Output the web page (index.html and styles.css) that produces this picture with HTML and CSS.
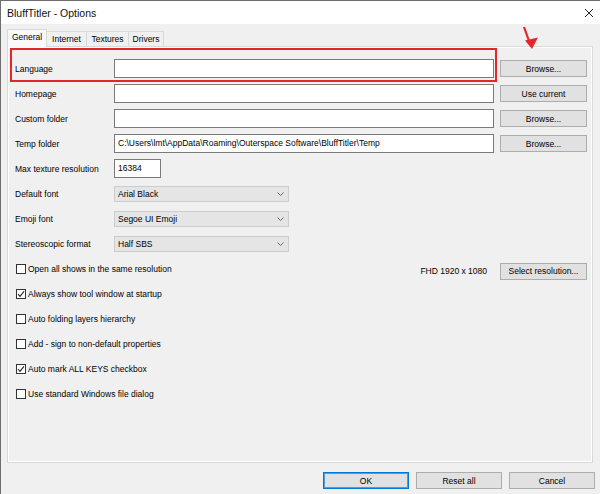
FILE: index.html
```html
<!DOCTYPE html>
<html>
<head>
<meta charset="utf-8">
<link rel="stylesheet" href="styles.css">
</head>
<body>
<div class="window">
  <div class="titlebar">
    <span class="title">BluffTitler - Options</span>
    <svg class="close" width="10" height="10" viewBox="0 0 10 10"><path d="M1 1L9 9M9 1L1 9" stroke="#222" stroke-width="1" fill="none"/></svg>
  </div>
  <div class="body">
    <div class="tabs">
      <div class="tab active t-general">General</div>
      <div class="tab t-internet">Internet</div>
      <div class="tab t-textures">Textures</div>
      <div class="tab t-drivers">Drivers</div>
    </div>
    <div class="panel">
      <div class="row"><span class="label">Language</span><div class="input"></div><div class="btn side">Browse...</div></div>
      <div class="row"><span class="label">Homepage</span><div class="input"></div><div class="btn side">Use current</div></div>
      <div class="row"><span class="label">Custom folder</span><div class="input"></div><div class="btn side">Browse...</div></div>
      <div class="row"><span class="label">Temp folder</span><div class="input">C:\Users\lmt\AppData\Roaming\Outerspace Software\BluffTitler\Temp</div><div class="btn side">Browse...</div></div>
      <div class="row"><span class="label">Max texture resolution</span><div class="input short">16384</div></div>
      <div class="row"><span class="label">Default font</span><div class="combo"><span>Arial Black</span><svg width="7" height="4" viewBox="0 0 7 4"><path d="M0.5 0.5L3.5 3.5L6.5 0.5" stroke="#666" fill="none"/></svg></div></div>
      <div class="row"><span class="label">Emoji font</span><div class="combo"><span>Segoe UI Emoji</span><svg width="7" height="4" viewBox="0 0 7 4"><path d="M0.5 0.5L3.5 3.5L6.5 0.5" stroke="#666" fill="none"/></svg></div></div>
      <div class="row"><span class="label">Stereoscopic format</span><div class="combo"><span>Half SBS</span><svg width="7" height="4" viewBox="0 0 7 4"><path d="M0.5 0.5L3.5 3.5L6.5 0.5" stroke="#666" fill="none"/></svg></div></div>
      <div class="row">
        <div class="check"><span class="box"></span>Open all shows in the same resolution</div>
        <div class="res"><span>FHD 1920 x 1080</span><div class="btn side">Select resolution...</div></div>
      </div>
      <div class="row"><div class="check"><span class="box"><svg width="8" height="8" viewBox="0 0 8 8"><path d="M1 4L3 6.3L7 1.3" stroke="#222" stroke-width="1.1" fill="none"/></svg></span>Always show tool window at startup</div></div>
      <div class="row"><div class="check"><span class="box"></span>Auto folding layers hierarchy</div></div>
      <div class="row"><div class="check"><span class="box"></span>Add - sign to non-default properties</div></div>
      <div class="row"><div class="check"><span class="box"><svg width="8" height="8" viewBox="0 0 8 8"><path d="M1 4L3 6.3L7 1.3" stroke="#222" stroke-width="1.1" fill="none"/></svg></span>Auto mark ALL KEYS checkbox</div></div>
      <div class="row"><div class="check"><span class="box"></span>Use standard Windows file dialog</div></div>
    </div>
    <div class="footer">
      <div class="btn foot default">OK</div>
      <div class="btn foot">Reset all</div>
      <div class="btn foot">Cancel</div>
    </div>
  </div>
  <div class="highlight"></div>
  <svg class="arrow" width="18" height="26" viewBox="0 0 18 26"><path d="M2 1L7 15" stroke="#e3262b" stroke-width="2.2" fill="none"/><path d="M3 14.5L16 11.5L10 23Z" fill="#e3262b"/></svg>
</div>
</body>
</html>
```

FILE: styles.css
```css
html, body {
  margin: 0;
  padding: 0;
}
body {
  width: 600px;
  height: 494px;
  overflow: hidden;
  background: #f0f0f0;
  font-family: "Liberation Sans", Arial, sans-serif;
  font-size: 8.5px;
  color: #000;
}
.window {
  position: relative;
  width: 600px;
  height: 494px;
  box-sizing: border-box;
  border-top: 1px solid #6e6e6e;
  border-left: 1px solid #6e6e6e;
  background: #f0f0f0;
}
.titlebar {
  height: 23px;
  background: #fff;
  display: flex;
  align-items: center;
  justify-content: space-between;
  padding: 0 6px 0 6px;
}
.title {
  font-size: 10.5px;
  color: #111;
}
.close {
  display: block;
}
.body {
  padding: 4px 5px 0 6px;
}
.tabs {
  display: flex;
  align-items: flex-end;
  height: 18px;
}
.tab {
  height: 15px;
  box-sizing: border-box;
  border: 1px solid #d9d9d9;
  border-bottom: none;
  border-left: none;
  background: #f0f0f0;
  display: flex;
  align-items: center;
  justify-content: center;
  line-height: 1;
  padding-top: 1px;
}
.tab.active {
  height: 18px;
  border-left: 1px solid #d9d9d9;
  background: #f9f9f9;
  position: relative;
  top: 1px;
  padding-top: 0;
  padding-bottom: 3px;
}
.t-general { width: 40px; }
.t-internet { width: 40px; }
.t-textures { width: 42px; }
.t-drivers { width: 35px; }
.panel {
  height: 417px;
  box-sizing: border-box;
  margin-right: 2px;
  border: 1px solid #d9d9d9;
  box-shadow: inset 1px 1px 0 #fff, inset -1px -1px 0 #fff;
  padding: 9px 5px 0 7px;
  background: #f0f0f0;
}
.row {
  height: 25px;
  display: flex;
  align-items: center;
}
.label {
  width: 99px;
  flex: none;
}
.input {
  flex: 1;
  height: 19px;
  box-sizing: border-box;
  border: 1px solid #7a7a7a;
  background: #fff;
  padding-left: 3px;
  line-height: 17px;
  white-space: nowrap;
  overflow: hidden;
}
.input.short {
  flex: none;
  width: 47px;
}
.btn {
  height: 17px;
  box-sizing: border-box;
  border: 1px solid #adadad;
  background: #e1e1e1;
  display: flex;
  align-items: center;
  justify-content: center;
  white-space: nowrap;
}
.btn.side {
  width: 87px;
  margin-left: 6px;
  flex: none;
}
.combo {
  width: 175px;
  height: 16px;
  box-sizing: border-box;
  border: 1px solid #cccccc;
  background: #e5e5e5;
  display: flex;
  align-items: center;
  justify-content: space-between;
  padding: 0 4px 0 3px;
}
.combo svg {
  display: block;
}
.check {
  display: flex;
  align-items: center;
  margin-left: 1px;
}
.box {
  width: 10px;
  height: 10px;
  box-sizing: border-box;
  border: 1px solid #333;
  background: #fff;
  margin-right: 2px;
  display: flex;
  align-items: center;
  justify-content: center;
}
.box svg {
  display: block;
}
.res {
  margin-left: auto;
  display: flex;
  align-items: center;
  margin-top: 5px;
}
.res .btn.side {
  margin-left: 13px;
}
.footer {
  display: flex;
  justify-content: flex-end;
  gap: 7px;
  margin-top: 9px;
}
.btn.foot {
  width: 86px;
}
.btn.default {
  border: 1px solid #0078d7;
  box-shadow: inset 0 0 0 1px #4a9ee0;
}
.highlight {
  position: absolute;
  left: 9px;
  top: 47px;
  width: 487px;
  height: 34px;
  box-sizing: border-box;
  border: 2px solid #e3262b;
}
.arrow {
  position: absolute;
  left: 521px;
  top: 25px;
}
```
